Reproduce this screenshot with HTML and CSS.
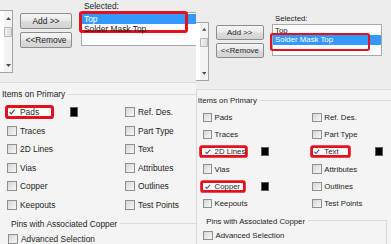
FILE: index.html
```html
<!DOCTYPE html>
<html lang="en">
<head>
    <meta charset="UTF-8">
    <title>Selection Filter</title>
    <link rel="stylesheet" href="styles.css">
</head>
<body>
    <div class="shot">
        <!-- first capture: Top selected, Pads on -->
        <section class="panel">
            <div class="transfer">
                <div class="avail">
                    <div class="avail-items"></div>
                    <div class="scrollbar">
                        <span class="arrow"><svg width="5" height="3" viewBox="0 0 5 3"><path d="M0 3 L2.5 0 L5 3 Z" fill="#4d4d4d"/></svg></span>
                        <span class="thumb"></span>
                        <span class="spacer"></span>
                        <span class="arrow"><svg width="5" height="3" viewBox="0 0 5 3"><path d="M0 0 L2.5 3 L5 0 Z" fill="#4d4d4d"/></svg></span>
                    </div>
                </div>
                <div class="buttons">
                    <button>Add &gt;&gt;</button>
                    <button>&lt;&lt;Remove</button>
                </div>
                <div class="selected">
                    <div class="caption">Selected:</div>
                    <ul class="list">
                        <li class="sel marked">Top</li>
                        <li>Solder Mask Top</li>
                    </ul>
                </div>
            </div>
            <div class="options">
                <div class="group items">
                    <div class="group-title">Items on Primary</div>
                    <div class="grid">
                        <label class="check marked"><span class="box on"><svg viewBox="0 0 10 10"><path d="M2 5.2 L4 7.4 L8.2 2.4" /></svg></span>Pads</label>
                        <span class="swatch"></span>
                        <label class="check"><span class="box"></span>Ref. Des.</label>
                        <span></span>

                        <label class="check"><span class="box"></span>Traces</label>
                        <span></span>
                        <label class="check"><span class="box"></span>Part Type</label>
                        <span></span>

                        <label class="check"><span class="box"></span>2D Lines</label>
                        <span></span>
                        <label class="check"><span class="box"></span>Text</label>
                        <span></span>

                        <label class="check"><span class="box"></span>Vias</label>
                        <span></span>
                        <label class="check"><span class="box"></span>Attributes</label>
                        <span></span>

                        <label class="check"><span class="box"></span>Copper</label>
                        <span></span>
                        <label class="check"><span class="box"></span>Outlines</label>
                        <span></span>

                        <label class="check"><span class="box"></span>Keepouts</label>
                        <span></span>
                        <label class="check"><span class="box"></span>Test Points</label>
                        <span></span>
                    </div>
                </div>
                <div class="group pins">
                    <div class="group-title">Pins with Associated Copper</div>
                    <div class="pins-body">
                        <label class="check"><span class="box"></span>Advanced Selection</label>
                    </div>
                </div>
            </div>
        </section>

        <!-- second capture: Solder Mask Top selected -->
        <section class="panel panel-small">
            <div class="transfer">
                <div class="avail">
                    <div class="avail-items"></div>
                    <div class="scrollbar">
                        <span class="arrow"><svg width="5" height="3" viewBox="0 0 5 3"><path d="M0 3 L2.5 0 L5 3 Z" fill="#4d4d4d"/></svg></span>
                        <span class="thumb"></span>
                        <span class="spacer"></span>
                        <span class="arrow"><svg width="5" height="3" viewBox="0 0 5 3"><path d="M0 0 L2.5 3 L5 0 Z" fill="#4d4d4d"/></svg></span>
                    </div>
                </div>
                <div class="buttons">
                    <button>Add &gt;&gt;</button>
                    <button>&lt;&lt;Remove</button>
                </div>
                <div class="selected">
                    <div class="caption">Selected:</div>
                    <ul class="list">
                        <li>Top</li>
                        <li class="sel marked">Solder Mask Top</li>
                    </ul>
                </div>
            </div>
            <div class="options">
                <div class="group items">
                    <div class="group-title">Items on Primary</div>
                    <div class="grid">
                        <label class="check"><span class="box"></span>Pads</label>
                        <span></span>
                        <label class="check"><span class="box"></span>Ref. Des.</label>
                        <span></span>

                        <label class="check"><span class="box"></span>Traces</label>
                        <span></span>
                        <label class="check"><span class="box"></span>Part Type</label>
                        <span></span>

                        <label class="check marked wide"><span class="box on"><svg viewBox="0 0 10 10"><path d="M2 5.2 L4 7.4 L8.2 2.4" /></svg></span>2D Lines</label>
                        <span class="swatch"></span>
                        <label class="check marked short"><span class="box on"><svg viewBox="0 0 10 10"><path d="M2 5.2 L4 7.4 L8.2 2.4" /></svg></span>Text</label>
                        <span class="swatch"></span>

                        <label class="check"><span class="box"></span>Vias</label>
                        <span></span>
                        <label class="check"><span class="box"></span>Attributes</label>
                        <span></span>

                        <label class="check marked"><span class="box on"><svg viewBox="0 0 10 10"><path d="M2 5.2 L4 7.4 L8.2 2.4" /></svg></span>Copper</label>
                        <span class="swatch"></span>
                        <label class="check"><span class="box"></span>Outlines</label>
                        <span></span>

                        <label class="check"><span class="box"></span>Keepouts</label>
                        <span></span>
                        <label class="check"><span class="box"></span>Test Points</label>
                        <span></span>
                    </div>
                </div>
                <div class="group pins">
                    <div class="group-title">Pins with Associated Copper</div>
                    <div class="pins-body">
                        <label class="check"><span class="box"></span>Advanced Selection</label>
                    </div>
                </div>
            </div>
        </section>
    </div>
</body>
</html>
```

FILE: styles.css
```css
* {
  box-sizing: border-box;
  margin: 0;
  padding: 0;
}

body {
  width: 391px;
  height: 244px;
  overflow: hidden;
  font-family: 'Liberation Sans', Arial, sans-serif;
  font-size: 8.4px;
  color: #1c1c1c;
  background-color: #f0f0f0;
}

.shot {
  display: flex;
  height: 244px;
}

.panel {
  flex-shrink: 0;
  width: 196px;
  height: 244px;
  overflow: hidden;
  display: flex;
  flex-direction: column;
  background-color: #ededed;
}

/* second capture was taken a little smaller and lower */
.panel-small {
  zoom: 0.93;
  width: 210px;
  height: 263px;
  padding-top: 14px;
}

.transfer {
  flex-shrink: 0;
  height: 83px;
  display: flex;
  align-items: flex-start;
  border-bottom: 1px solid #dcdcdc;
}

.avail {
  width: 14px;
  height: 63px;
  margin-top: 10px;
  display: flex;
  border: 1px solid #a3a3a3;
  border-left: none;
  background-color: #fff;
}

.avail-items {
  width: 4px;
}

.scrollbar {
  flex: 1;
  display: flex;
  flex-direction: column;
  align-items: center;
  background-color: #f3f3f3;
}

.arrow {
  height: 14px;
  display: flex;
  align-items: center;
}

.arrow svg {
  display: block;
}

.thumb {
  width: 8px;
  height: 10px;
  margin-top: 2px;
  border: 1px solid #b7b7b7;
  border-radius: 1px;
  background: linear-gradient(90deg, #f2f2f2, #dcdcdc);
}

.spacer {
  flex: 1;
}

.buttons {
  margin-top: 13px;
  margin-left: 7px;
  display: flex;
  flex-direction: column;
  gap: 3px;
}

button {
  width: 52px;
  height: 16px;
  font: inherit;
  color: #222;
  border: 1px solid #8c8c8c;
  border-radius: 2px;
  background: linear-gradient(#f5f5f5, #e9e9e9 48%, #dcdcdc 52%, #d3d3d3);
}

.selected {
  margin-left: 9px;
  display: flex;
  flex-direction: column;
}

.caption {
  height: 12px;
  line-height: 12px;
  padding-left: 3px;
}

.list {
  width: 118px;
  height: 34px;
  padding-top: 1px;
  list-style: none;
  border: 1px solid #a8a8a8;
  background-color: #fff;
}

.list li {
  position: relative;
  height: 10px;
  line-height: 10px;
  padding-left: 2px;
  white-space: nowrap;
}

.list li.sel {
  background-color: #3399ff;
  color: #fff;
}

/* red annotation boxes */
.list li.marked::after {
  content: "";
  position: absolute;
  left: -3px;
  top: -3px;
  width: 103px;
  height: 16px;
  border: 3px solid #e3101e;
  border-radius: 3px;
}

.options {
  flex: 1;
  background-color: #f4f4f4;
}

.panel-small .options {
  box-shadow: inset 1px 0 0 #d6d6d6;
}

.group-title {
  display: flex;
  align-items: center;
  gap: 3px;
  height: 10px;
  line-height: 10px;
  white-space: nowrap;
}

.group-title::after {
  content: "";
  flex: 1;
  border-top: 1px solid #dadada;
}

.items {
  margin-top: 6px;
  padding-left: 2px;
}

.grid {
  margin-top: 3.7px;
  margin-left: -2px;
  padding-left: 7px;
  display: grid;
  grid-template-columns: 63px 55px 68px 20px;
  grid-auto-rows: 18.6px;
  align-items: center;
}

.check {
  position: relative;
  isolation: isolate;
  display: flex;
  align-items: center;
  gap: 3px;
  height: 10px;
  white-space: nowrap;
}

.check.marked::before {
  content: "";
  position: absolute;
  z-index: -1;
  left: 1px;
  top: 1px;
  width: 43px;
  height: 8px;
  background-color: #fff;
  box-shadow: 0 0 0 3px #e3101e;
  border-radius: 1px;
}

.check.marked.wide::before {
  left: -1px;
  width: 47px;
}

.check.marked.short::before {
  width: 38px;
}

.box {
  flex-shrink: 0;
  width: 10px;
  height: 10px;
  border: 1px solid #8f8f8f;
  background: linear-gradient(135deg, #d6d6d6, #f7f7f7);
}

.box.on {
  border-color: transparent;
  background: none;
}

.box svg {
  display: block;
  width: 8px;
  height: 8px;
}

.box svg path {
  fill: none;
  stroke: #2d4486;
  stroke-width: 1.4;
}

.swatch {
  width: 8px;
  height: 10px;
  background-color: #000;
  border: 1px solid #5c5c5c;
}

.pins {
  width: 205px;
  margin-top: 4.7px;
  padding-left: 11px;
}

.pins .group-title::after {
  align-self: flex-end;
  height: 50%;
  border-right: 1px solid #dadada;
}

.pins-body {
  height: 20px;
  margin-left: -11px;
  padding-top: 5px;
  padding-left: 8px;
  border-right: 1px solid #dadada;
}
```
